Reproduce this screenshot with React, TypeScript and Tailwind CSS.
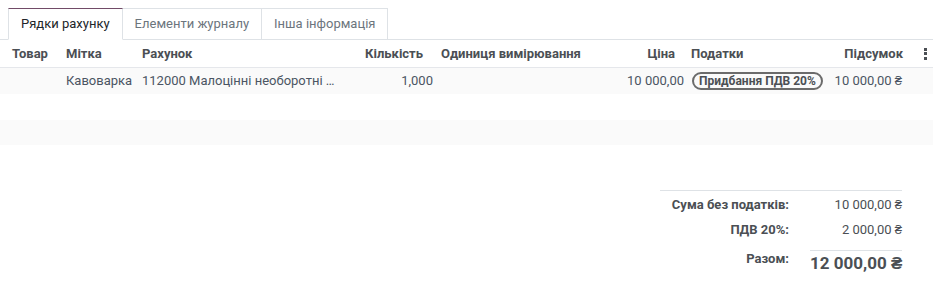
import React from "react";

// Invoice lines tab with totals
const rowText = "text-[#4b5563]";

function Tab({ label, active }: { label: string; active?: boolean }) {
  return (
    <div
      className={
        active
          ? "-mb-px h-8 px-3 flex items-center border border-[#dee2e6] border-t-[#714b67] border-b-white bg-white text-[#212529]"
          : "-mb-px h-8 px-3 flex items-center border border-[#dee2e6] border-l-0 text-[#6c757d]"
      }
    >
      {label}
    </div>
  );
}

export default function App() {
  return (
    <div className="w-[933px] h-[284px] bg-white font-['Roboto',sans-serif] text-[13px] overflow-hidden">
      {/* Tabs */}
      <div className="flex pt-2 pl-2 border-b border-[#dee2e6]">
        <Tab label="Рядки рахунку" active />
        <Tab label="Елементи журналу" />
        <Tab label="Інша інформація" />
      </div>

      {/* Table header */}
      <div className="flex h-[28px] items-center font-bold text-[#4b4f54] border-b border-[#e5e7eb] shadow-[0_1px_1px_rgba(0,0,0,0.04)]">
        <div className="w-[58px] pl-3">Товар</div>
        <div className="w-[76px] pl-2">Мітка</div>
        <div className="w-[227px] pl-2">Рахунок</div>
        <div className="w-[76px] pr-[14px] text-right">Кількість</div>
        <div className="w-[163px] pl-1">Одиниця вимірювання</div>
        <div className="w-[88px] pr-[13px] text-right">Ціна</div>
        <div className="w-[138px] pl-[3px]">Податки</div>
        <div className="w-[84px] pr-[7px] text-right">Підсумок</div>
        <div className="flex-1 flex justify-end pr-[6px]">
          <div className="flex flex-col gap-[1.5px]">
            <span className="w-[3px] h-[3px] bg-[#4b4f54]" />
            <span className="w-[3px] h-[3px] bg-[#4b4f54]" />
            <span className="w-[3px] h-[3px] bg-[#4b4f54]" />
          </div>
        </div>
      </div>

      {/* Data row */}
      <div className={`flex h-[26px] items-center bg-[#fafafa] ${rowText}`}>
        <div className="w-[58px] pl-3" />
        <div className="w-[76px] pl-2">Кавоварка</div>
        <div className="w-[227px] pl-2 whitespace-nowrap">112000 Малоцінні необоротні …</div>
        <div className="w-[76px] pr-1 text-right">1,000</div>
        <div className="w-[163px] pl-1" />
        <div className="w-[88px] pr-1 text-right whitespace-nowrap">10 000,00</div>
        <div className="w-[138px] pl-1">
          <span className="inline-flex items-center h-[18px] px-[5px] rounded-full border-2 border-[#6b6b6b] text-[12px] font-bold text-[#4b4f54] whitespace-nowrap">
            Придбання ПДВ 20%
          </span>
        </div>
        <div className="w-[84px] pr-2 text-right whitespace-nowrap">10 000,00 ₴</div>
        <div className="flex-1" />
      </div>
      <div className="h-[26px]" />
      <div className="h-[25px] bg-[#fafafa]" />

      {/* Totals */}
      <div className="flex justify-end pr-[31px] pt-[45px]">
        <div className="w-[242px] border-t border-[#dee2e6] pt-[1px] text-[#4b4f54]">
          <div className="flex h-[25px] items-center">
            <div className="flex-1 text-right pr-[9px] font-bold">Сума без податків:</div>
            <div className="w-[104px] text-right whitespace-nowrap">10 000,00 ₴</div>
          </div>
          <div className="flex h-[25px] items-center">
            <div className="flex-1 text-right pr-[9px] font-bold">ПДВ 20%:</div>
            <div className="w-[104px] text-right whitespace-nowrap">2 000,00 ₴</div>
          </div>
          <div className="flex pt-[8px]">
            <div className="flex-1 text-right pr-[21px] font-bold leading-[14px] pt-[2px]">Разом:</div>
            <div className="w-[92px] border-t border-[#dee2e6] text-right text-[17px] font-bold whitespace-nowrap">
              12 000,00 ₴
            </div>
          </div>
        </div>
      </div>
    </div>
  );
}
